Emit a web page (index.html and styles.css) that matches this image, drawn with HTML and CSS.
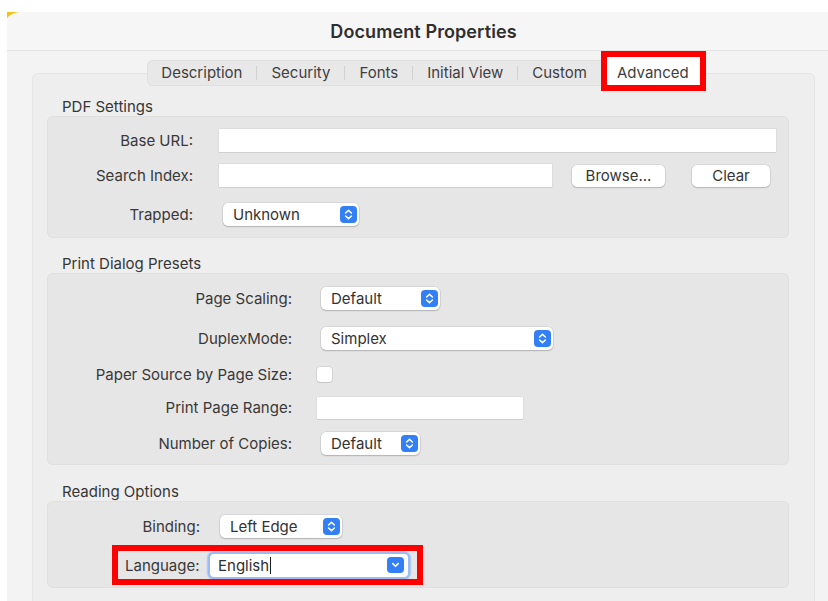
FILE: index.html
```html
<!DOCTYPE html>
<html lang="en">
<head>
<meta charset="utf-8">
<title>Document Properties</title>
<link rel="stylesheet" href="styles.css">
</head>
<body>
<div class="window">
  <svg class="corner" width="12" height="7" viewBox="0 0 12 7"><path d="M0 0 H12 Q4 1 0 6 Z" fill="#f4c20f"/></svg>
  <header class="titlebar"><h1>Document Properties</h1></header>
  <div class="content">
    <nav class="tabs">
      <span class="tab">Description</span><span class="sep"></span>
      <span class="tab">Security</span><span class="sep"></span>
      <span class="tab">Fonts</span><span class="sep"></span>
      <span class="tab">Initial View</span><span class="sep"></span>
      <span class="tab">Custom</span>
      <span class="tab selected">Advanced</span>
    </nav>
    <div class="tabbox">
      <section class="section">
        <h2>PDF Settings</h2>
        <div class="group g-pdf">
          <div class="row"><span class="label">Base URL:</span><span class="input base-url"></span></div>
          <div class="row r2"><span class="label">Search Index:</span><span class="input search-index"></span><span class="button browse">Browse...</span><span class="button clear">Clear</span></div>
          <div class="row r3"><span class="label">Trapped:</span><span class="popup w-trapped"><span class="value">Unknown</span><svg class="stepper" width="17" height="17" viewBox="0 0 17 17"><rect width="17" height="17" rx="4" fill="#3380f6"/><path d="M5.6 7 L8.5 4.4 L11.4 7 M5.6 10 L8.5 12.6 L11.4 10" fill="none" stroke="#fff" stroke-width="1.5" stroke-linecap="round" stroke-linejoin="round"/></svg></span></div>
        </div>
      </section>
      <section class="section s2">
        <h2>Print Dialog Presets</h2>
        <div class="group g-print">
          <div class="row"><span class="label">Page Scaling:</span><span class="popup w-scaling"><span class="value">Default</span><svg class="stepper" width="17" height="17" viewBox="0 0 17 17"><rect width="17" height="17" rx="4" fill="#3380f6"/><path d="M5.6 7 L8.5 4.4 L11.4 7 M5.6 10 L8.5 12.6 L11.4 10" fill="none" stroke="#fff" stroke-width="1.5" stroke-linecap="round" stroke-linejoin="round"/></svg></span></div>
          <div class="row p2"><span class="label">DuplexMode:</span><span class="popup w-duplex"><span class="value">Simplex</span><svg class="stepper" width="17" height="17" viewBox="0 0 17 17"><rect width="17" height="17" rx="4" fill="#3380f6"/><path d="M5.6 7 L8.5 4.4 L11.4 7 M5.6 10 L8.5 12.6 L11.4 10" fill="none" stroke="#fff" stroke-width="1.5" stroke-linecap="round" stroke-linejoin="round"/></svg></span></div>
          <div class="row p3"><span class="label">Paper Source by Page Size:</span><span class="checkbox"></span></div>
          <div class="row p4"><span class="label">Print Page Range:</span><span class="input page-range"></span></div>
          <div class="row p5"><span class="label">Number of Copies:</span><span class="popup w-copies"><span class="value">Default</span><svg class="stepper" width="17" height="17" viewBox="0 0 17 17"><rect width="17" height="17" rx="4" fill="#3380f6"/><path d="M5.6 7 L8.5 4.4 L11.4 7 M5.6 10 L8.5 12.6 L11.4 10" fill="none" stroke="#fff" stroke-width="1.5" stroke-linecap="round" stroke-linejoin="round"/></svg></span></div>
        </div>
      </section>
      <section class="section s3">
        <h2>Reading Options</h2>
        <div class="group g-reading">
          <div class="row"><span class="label">Binding:</span><span class="popup w-binding"><span class="value">Left Edge</span><svg class="stepper" width="17" height="17" viewBox="0 0 17 17"><rect width="17" height="17" rx="4" fill="#3380f6"/><path d="M5.6 7 L8.5 4.4 L11.4 7 M5.6 10 L8.5 12.6 L11.4 10" fill="none" stroke="#fff" stroke-width="1.5" stroke-linecap="round" stroke-linejoin="round"/></svg></span></div>
          <div class="language-row"><span class="lang-label">Language:</span><span class="combo"><span class="value">English</span><span class="caret"></span><svg class="stepper" width="17" height="16" viewBox="0 0 17 16"><rect width="17" height="16" rx="4" fill="#3380f6"/><path d="M5.8 6.6 L8.5 9.3 L11.2 6.6" fill="none" stroke="#fff" stroke-width="1.6" stroke-linecap="round" stroke-linejoin="round"/></svg></span></div>
        </div>
      </section>
    </div>
  </div>
</div>
</body>
</html>
```

FILE: styles.css
```css
html, body {
  margin: 0;
  padding: 0;
}

body {
  background: #ffffff;
  height: 601px;
  overflow: hidden;
  font-family: "Inter", "Liberation Sans", sans-serif;
  font-size: 15px;
  color: #383838;
}

.window {
  position: relative;
  margin: 12px 0 0 7px;
  width: 833px;
  height: 589px;
  background: #f4f3f3;
  overflow: hidden;
}

.corner {
  position: absolute;
  left: 0;
  top: 0;
}

.titlebar {
  height: 38px;
  background: #f7f6f6;
  border-bottom: 1px solid #e3e2e2;
  display: flex;
  align-items: center;
  justify-content: center;
}

.titlebar h1 {
  margin: 0;
  font-size: 18px;
  font-weight: 600;
  color: #2f2f2f;
  letter-spacing: 0.1px;
}

.content {
  padding-top: 9px;
}

/* segmented tab control */
.tabs {
  position: relative;
  z-index: 1;
  display: flex;
  align-items: center;
  width: max-content;
  margin: 0 auto;
  height: 26px;
  background: #e9e8e8;
  border-radius: 6px;
  box-shadow: inset 0 0 0 1px #e0dfdf;
}

.tab {
  padding: 0 14px;
  color: #3e3e3e;
  line-height: 28px;
}

.sep {
  width: 1px;
  height: 14px;
  background: #d2d1d1;
}

.tab.selected {
  align-self: flex-start;
  margin-top: -3px;
  height: 28px;
  line-height: 31px;
  padding: 0 11px 0 10px;
  margin-left: 6px;
  background: #ffffff;
  outline: 6px solid #ff0000;
}

.tabbox {
  margin: -13px 25px 0 25px;
  padding: 23px 26px 0 15px;
  height: 600px;
  background: #efeeee;
  border-radius: 6px 6px 0 0;
  box-shadow: inset 0 0 0 1px #e6e5e5;
}

.section h2 {
  margin: 0;
  padding-left: 15px;
  height: 20px;
  line-height: 21px;
  font-size: 15px;
  font-weight: 400;
  color: #363636;
}

.s2 { margin-top: 15px; }
.s3 { margin-top: 16px; }

.group {
  background: #e7e6e6;
  border-radius: 6px;
  box-shadow: inset 0 0 0 1px #e1e0e0;
}

.row {
  display: flex;
  align-items: center;
  height: 23px;
}

.label {
  flex: none;
  text-align: right;
  color: #383838;
}

/* PDF Settings */
.g-pdf {
  padding: 13px 13px 12px 0;
}
.g-pdf .label { width: 146px; margin-right: 26px; }
.g-pdf .r2 { margin-top: 12px; }
.g-pdf .r3 { margin-top: 16px; }

.base-url { flex: 1; }
.search-index { width: 333px; }

.input {
  height: 23px;
  background: #ffffff;
  box-shadow: 0 0 0 0.5px rgba(0, 0, 0, 0.08), 0 1px 0 rgba(0, 0, 0, 0.06);
}

.button {
  height: 22px;
  line-height: 22px;
  text-align: center;
  background: #ffffff;
  border-radius: 5px;
  color: #363636;
  box-shadow: 0 0 0 0.5px rgba(0, 0, 0, 0.12), 0 1px 1.5px rgba(0, 0, 0, 0.16);
}

.browse { width: 93px; margin-left: 20px; }
.clear { width: 78px; margin-left: 27px; }

.popup {
  display: flex;
  align-items: center;
  justify-content: space-between;
  height: 23px;
  margin-left: 4px;
  padding: 0 2px 0 10px;
  box-sizing: border-box;
  background: #ffffff;
  border-radius: 5px;
  box-shadow: 0 0 0 0.5px rgba(0, 0, 0, 0.12), 0 1px 1.5px rgba(0, 0, 0, 0.18);
  color: #333333;
}

.stepper { flex: none; display: block; }

.w-trapped { width: 136px; }
.w-scaling { width: 119px; }
.w-duplex { width: 232px; }
.w-copies { width: 99px; }
.w-binding { width: 122px; }

/* Print Dialog Presets */
.g-print {
  padding: 14px 0 10px 0;
}
.g-print .label { width: 245px; margin-right: 25px; }
.g-print .p2 { margin-top: 17px; }
.g-print .p3 { margin-top: 13px; }
.g-print .p4 { margin-top: 10px; }
.g-print .p5 { margin-top: 13px; }

.checkbox {
  width: 15px;
  height: 15px;
  background: #ffffff;
  border-radius: 3px;
  box-shadow: 0 0 0 0.5px rgba(0, 0, 0, 0.15), 0 1px 1px rgba(0, 0, 0, 0.08);
}

.page-range { width: 206px; height: 22px; }

/* Reading Options */
.g-reading {
  padding: 14px 0 9px 0;
}
.g-reading .label { width: 153px; margin-right: 16px; }

.language-row {
  display: flex;
  align-items: center;
  width: 292px;
  height: 28px;
  margin: 13px 0 0 71px;
  padding-left: 7px;
  outline: 6px solid #ff0000;
}

.lang-label {
  width: 75px;
  margin-right: 10px;
  color: #383838;
}

.combo {
  display: flex;
  align-items: center;
  width: 198px;
  height: 23px;
  box-sizing: border-box;
  padding: 0 4px 0 8px;
  background: #ffffff;
  border-radius: 4px;
  box-shadow: 0 0 0 2.5px #9bbdf3, 0 0 0 3.5px #c4d8f7;
  color: #2f2f2f;
}

.combo .value { line-height: 23px; }

.caret {
  width: 1px;
  height: 17px;
  margin-left: 1px;
  background: #1e1e1e;
}

.combo .stepper { margin-left: auto; }
```
